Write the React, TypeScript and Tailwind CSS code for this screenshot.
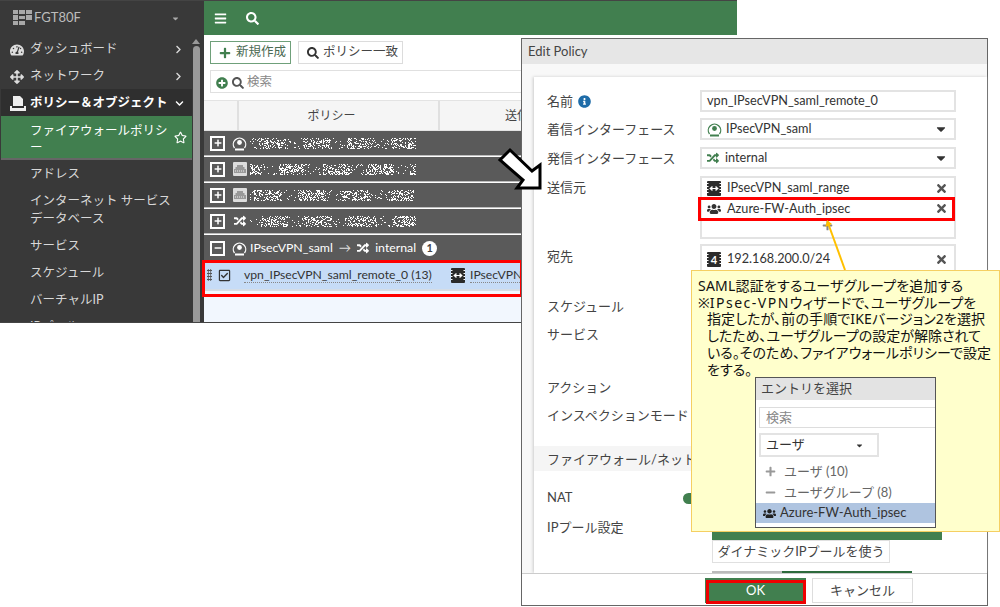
import type { ReactNode } from "react";
import {
  FaBars,
  FaCaretDown,
  FaChevronDown,
  FaChevronRight,
  FaMinus,
  FaPlus,
  FaPlusCircle,
  FaRandom,
  FaRegCheckSquare,
  FaRegStar,
  FaSearch,
  FaTachometerAlt,
  FaArrowsAlt,
  FaTimes,
  FaUsers,
  FaInfoCircle,
} from "react-icons/fa";

// white speckle used for the blurred-out policy names
function noisePath(seed: number) {
  let s = seed;
  const rnd = () => {
    s = (s * 1664525 + 1013904223) % 4294967296;
    return s / 4294967296;
  };
  let d = "";
  for (let x = 0; x < 166; x++) {
    const dense = Math.sin(x / 7 + seed) > -0.4 ? 0.36 : 0.08;
    for (let y = 3; y < 14; y++) {
      if (rnd() < dense) d += `M${x} ${y}h1v1h-1z`;
    }
  }
  return d;
}

function Noise({ seed }: { seed: number }) {
  return (
    <svg width="166" height="16" viewBox="0 0 166 16" className="-ml-[4px] shrink-0">
      <path d={noisePath(seed)} fill="#fff" />
    </svg>
  );
}

function FortiLogo() {
  return (
    <svg width="19" height="16" viewBox="0 0 19 16" fill="#a8a8a8">
      <rect x="0" y="0" width="5" height="4" />
      <rect x="6" y="0" width="6" height="4" />
      <rect x="13" y="0" width="6" height="4" />
      <rect x="0" y="5" width="5" height="5" />
      <rect x="13" y="5" width="6" height="5" />
      <rect x="6" y="6" width="6" height="3" />
      <rect x="0" y="11" width="5" height="4" />
      <rect x="6" y="11" width="6" height="4" />
    </svg>
  );
}

function PolicyIcon() {
  return (
    <svg width="16" height="15" viewBox="0 0 16 15" fill="#eee">
      <path d="M3 0h7l3 3v7H3z" />
      <path d="M0 10h2v2h12v-2h2v5H0z" />
    </svg>
  );
}

function TunnelIcon({ color = "#fff" }: { color?: string }) {
  return (
    <svg width="15" height="15" viewBox="0 0 15 15" fill="none" stroke={color}>
      <path d="M2.5 12A6.2 6.2 0 1 1 12.5 12" strokeWidth="1.3" />
      <circle cx="7.5" cy="6.5" r="2.4" fill={color} stroke="none" />
      <path d="M3 13.5h9" strokeWidth="2" />
    </svg>
  );
}

function PortIcon() {
  return (
    <svg width="14" height="14" viewBox="0 0 14 14">
      <rect width="14" height="14" rx="1" fill="#ddd" />
      <path d="M4 3h6v2h1.500v2H13v4H1V7h1.500V5H4z" fill="#999" />
      <path d="M2 9h10" stroke="#eee" strokeDasharray="1 1" />
    </svg>
  );
}

function AddrIcon({ children }: { children?: ReactNode }) {
  return (
    <svg width="14" height="15" viewBox="0 0 14 15" className="shrink-0">
      <rect width="14" height="15" rx="1" fill="#2b2b2b" />
      <path d="M0 2.500h1.500M0 5.500h1.500M0 8.500h1.500M0 11.500h1.500M12.500 2.500H14M12.500 5.500H14M12.500 8.500H14M12.500 11.500H14" stroke="#fff" />
      {children ?? (
        <path d="M3 7.500h8M3 7.500l2-2v4zM11 7.500l-2-2v4z" stroke="#fff" fill="#fff" strokeWidth="1" />
      )}
    </svg>
  );
}

function SideItem({ label, tall }: { label: ReactNode; tall?: boolean }) {
  return (
    <div className={`flex items-center pl-[29px] pr-3 text-[12.500px] leading-[18px] text-[#d8d8d8] ${tall ? "h-[45px]" : "h-[27px]"}`}>
      {label}
    </div>
  );
}

function GroupRow({ icon, seed }: { icon: ReactNode; seed: number }) {
  return (
    <div className="mb-px flex h-[25px] items-center gap-[7px] border-b border-[#bdbdbd] bg-[#5a5a5a] pl-[6px]">
      <span className="flex h-[15px] w-[15px] items-center justify-center border-2 border-white text-white">
        <FaPlus size={8} />
      </span>
      <span className="flex w-[15px] justify-center">{icon}</span>
      <Noise seed={seed} />
    </div>
  );
}

function FormRow({ label, className, children }: { label: ReactNode; className: string; children?: ReactNode }) {
  return (
    <div className={`flex shrink-0 ${className}`}>
      <div className="flex w-[166px] shrink-0 items-start whitespace-nowrap pl-[13px] text-[13px] leading-[22px] text-[#444]">{label}</div>
      {children}
    </div>
  );
}

function Field({ children, className }: { children: ReactNode; className?: string }) {
  return (
    <div className={`flex w-[256px] items-center border-2 border-[#e3e3e3] bg-white pl-[5px] pr-[6px] text-[12.700px] text-[#333] ${className ?? "h-[22px]"}`}>
      {children}
    </div>
  );
}

const noteLine = "whitespace-pre font-['Noto_Sans','Noto_Sans_CJK_JP',sans-serif] text-[14px] leading-[16.700px] text-[#111] [font-feature-settings:'palt']";

export default function App() {
  return (
    <div className="relative h-[607px] w-[1000px] overflow-hidden bg-white font-['Lato','Noto_Sans_CJK_JP',sans-serif]">
      {/* back window */}
      <div className="absolute left-0 top-0 flex h-[323px] w-[737px] overflow-hidden border-t border-b border-[#444]">
        <aside className="flex w-[204px] shrink-0 bg-[#393939]">
          <div className="w-[192px] pl-px">
            <div className="flex h-[34px] items-center pl-3 pr-3 text-[13px] text-[#bcbcbc]">
              <FortiLogo />
              <span className="ml-[2px]">FGT80F</span>
              <FaCaretDown size={9} className="ml-auto text-[#aaa]" />
            </div>
            <div className="flex h-[27px] items-center pl-[9px] pr-2 pt-[2px] text-[12.500px] text-[#d8d8d8]">
              <FaTachometerAlt size={14} className="mr-[6px] text-[#ddd]" />
              ダッシュボード
              <FaChevronRight size={9} className="ml-auto mr-[1px]" />
            </div>
            <div className="flex h-[27px] items-center pl-[9px] pr-2 pt-[2px] text-[12.500px] text-[#d8d8d8]">
              <FaArrowsAlt size={14} className="mr-[6px] text-[#ddd]" />
              ネットワーク
              <FaChevronRight size={9} className="ml-auto mr-[1px]" />
            </div>
            <div className="flex h-[27px] items-center bg-[#2f2f2f] pl-[9px] pr-2 pt-[2px] text-[12.500px] font-bold text-white">
              <span className="mr-[4px]"><PolicyIcon /></span>
              ポリシー＆オブジェクト
              <FaChevronDown size={9} className="ml-auto" />
            </div>
            <div className="flex h-[44px] items-center border-b-2 border-[#666] bg-[#417f4f] pl-[29px] pr-[5px] text-[12.500px] leading-[17px] text-white">
              <span className="w-[140px] pt-[4px]">ファイアウォールポリシー</span>
              <FaRegStar size={13} className="ml-auto" />
            </div>
            <SideItem label="アドレス" />
            <SideItem tall label={<span>インターネット サービス<br />データベース</span>} />
            <SideItem label="サービス" />
            <SideItem label="スケジュール" />
            <SideItem label="バーチャルIP" />
            <SideItem label="IPプール" />
          </div>
          <div className="flex w-[8px] flex-col items-center pt-[38px]">
            <span className="h-0 w-0 border-x-[4px] border-b-[5px] border-x-transparent border-b-[#999]" />
            <span className="mt-[2px] h-full w-[7px] rounded-t bg-[#9a9a9a]" />
          </div>
        </aside>
        <main className="flex min-w-0 flex-1 flex-col bg-white">
          <div className="flex h-[34px] shrink-0 items-center gap-[19px] bg-[#417f4f] pl-[10px] text-white">
            <FaBars size={13} />
            <FaSearch size={13} />
          </div>
          <div className="flex gap-[7px] pl-[6px] pt-[6px]">
            <button className="flex h-[23px] w-[81px] items-center gap-[5px] whitespace-nowrap border border-[#6fa07a] pl-2 text-[12.500px] text-[#4b6a52]">
              <FaPlus size={12} className="text-[#417f4f]" />
              新規作成
            </button>
            <button className="flex h-[23px] w-[105px] items-center gap-[4px] whitespace-nowrap border border-[#dcdcdc] pl-2 text-[12.500px] text-[#444]">
              <FaSearch size={12} className="text-[#333]" />
              ポリシー一致
            </button>
          </div>
          <div className="ml-[6px] mt-[6px] flex h-[23px] w-[320px] items-center border border-[#e0e0e0] pl-[5px] pt-[2px] text-[12.500px] text-[#888]">
            <FaPlusCircle size={12} className="text-[#417f4f]" />
            <FaSearch size={12} className="ml-[4px] mr-[3px] text-[#555]" />
            検索
          </div>
          <div className="mt-[7px] flex h-[31px] shrink-0 border-t border-b border-[#e3e3e3] bg-[#f5f5f5] text-[12px] text-[#444]">
            <div className="w-[35px] border-r-2 border-[#e0e0e0]" />
            <div className="flex w-[201px] items-center justify-center border-r-2 border-[#e0e0e0] pr-[14px]">ポリシー</div>
            <div className="flex w-[150px] items-center justify-center pl-[16px]">送信元</div>
          </div>
          <GroupRow seed={11} icon={<TunnelIcon />} />
          <GroupRow seed={27} icon={<PortIcon />} />
          <GroupRow seed={43} icon={<PortIcon />} />
          <GroupRow seed={61} icon={<FaRandom size={12} className="text-white" />} />
          <div className="flex h-[26px] shrink-0 items-center gap-[7px] bg-[#5a5a5a] pl-[6px] text-[12.300px] text-white">
            <span className="flex h-[15px] w-[15px] items-center justify-center border-2 border-white">
              <FaMinus size={8} />
            </span>
            <span className="flex w-[15px] justify-center"><TunnelIcon /></span>
            <span className="-ml-[4px] flex items-center gap-[6px]">
              IPsecVPN_saml
              <span className="text-[#ddd]">→</span>
              <FaRandom size={12} />
              internal
              <span className="flex h-[15px] w-[15px] items-center justify-center rounded-full bg-white text-[11px] font-bold text-[#444]">1</span>
            </span>
          </div>
          <div className="flex h-[30px] shrink-0 items-center border-b-2 border-[#d5dde6] bg-[#c6dcf7] text-[12.200px] text-[#333]">
            <span className="flex w-[35px] items-center gap-[6px] pl-[3px]">
              <span className="h-[12px] w-[5px] bg-[radial-gradient(#555_1px,transparent_1px)] bg-[length:2.500px_3px]" />
              <FaRegCheckSquare size={13} className="text-[#333]" />
            </span>
            <span className="w-[207px] pl-[5px]">
              <span className="border-b border-dotted border-[#888] leading-[15px]">vpn_IPsecVPN_saml_remote_0 (13)</span>
            </span>
            <span className="flex items-center gap-[5px] pl-[5px]">
              <AddrIcon />
              <span className="border-b border-dotted border-[#888] leading-[15px]">IPsecVPN_saml_range</span>
            </span>
          </div>
          <div className="flex-1 bg-[#f2f7fe]" />
        </main>
      </div>

      {/* red highlight on the policy row */}
      <div className="absolute left-[202px] top-[260px] h-[37px] w-[321px] border-[3px] border-[#f00]" />

      {/* Edit Policy dialog */}
      <section className="absolute left-[521px] top-[38px] flex h-[568px] w-[467px] flex-col border border-[#666] bg-[#f8f8f8]">
        <div className="flex h-[25px] shrink-0 items-center bg-[#e6e6e6] pl-[6px] text-[13px] text-[#444]">Edit Policy</div>
        <div className="ml-[12px] mt-[13px] flex min-h-0 flex-1 flex-col overflow-hidden bg-white pt-[13px] shadow-[-1px_0_3px_#ccc]">
          <FormRow label={<span className="flex items-center gap-[5px]">名前<FaInfoCircle size={13} className="text-[#1f6ca8]" /></span>} className="h-[28px]">
            <Field>vpn_IPsecVPN_saml_remote_0</Field>
          </FormRow>
          <FormRow label="着信インターフェース" className="h-[29px]">
            <Field>
              <TunnelIcon color="#417f4f" />
              <span className="ml-[4px]">IPsecVPN_saml</span>
              <FaCaretDown size={14} className="ml-auto text-[#333]" />
            </Field>
          </FormRow>
          <FormRow label="発信インターフェース" className="h-[29px]">
            <Field>
              <FaRandom size={12} className="text-[#417f4f]" />
              <span className="ml-[6px]">internal</span>
              <FaCaretDown size={14} className="ml-auto text-[#333]" />
            </Field>
          </FormRow>
          <FormRow label="送信元" className="h-[69px]">
            <div className="flex h-[63px] w-[256px] flex-col border-2 border-[#e3e3e3] pl-[5px] pr-[6px] text-[12.700px] text-[#333]">
              <div className="flex h-[20px] shrink-0 items-center">
                <AddrIcon />
                <span className="ml-[6px]">IPsecVPN_saml_range</span>
                <FaTimes size={13} className="ml-auto text-[#555]" />
              </div>
              <div className="flex h-[21px] shrink-0 items-center">
                <FaUsers size={14} className="text-[#333]" />
                <span className="ml-[6px]">Azure-FW-Auth_ipsec</span>
                <FaTimes size={13} className="ml-auto text-[#555]" />
              </div>
              <div className="flex flex-1 justify-center pt-[1px]">
                <FaPlus size={11} className="text-[#888]" />
              </div>
            </div>
          </FormRow>
          <FormRow label="宛先" className="h-[50px]">
            <Field className="-mt-px h-[30px]">
              <AddrIcon>
                <text x="7" y="12" textAnchor="middle" fontSize="11" fontWeight="700" fill="#fff">4</text>
              </AddrIcon>
              <span className="ml-[6px]">192.168.200.0/24</span>
              <FaTimes size={13} className="ml-auto text-[#555]" />
            </Field>
          </FormRow>
          <FormRow label="スケジュール" className="h-[28px]" />
          <FormRow label="サービス" className="h-[53px]" />
          <FormRow label="アクション" className="h-[28px]" />
          <FormRow label="インスペクションモード" className="h-[42px]" />
          <div className="flex h-[25px] shrink-0 items-center whitespace-nowrap bg-[#f5f5f5] pl-[13px] pt-[3px] text-[13px] text-[#444]">ファイアウォール/ネットワークオプション</div>
          <div className="mt-[17px] flex h-[20px] shrink-0 items-center pl-[13px] text-[13px] text-[#444]">
            NAT
            <span className="ml-[110px] h-[11px] w-[22px] rounded-full bg-[#417f4f]" />
          </div>
          <div className="mt-[9px] flex h-[23px] shrink-0 pl-[13px] text-[13px] leading-[20px] text-[#444]">
            IPプール設定
            <span className="ml-[89px] h-[23px] w-[230px] bg-[#417f4f]" />
          </div>
          <div className="ml-[178px] flex h-[23px] w-[178px] shrink-0 items-center justify-center border border-[#e0e0e0] text-[13px] text-[#444]">
            ダイナミックIPプールを使う
          </div>
          <div className="ml-[178px] mt-[8px] flex shrink-0">
            <span className="h-[2px] w-[70px] bg-[#bbb]" />
            <span className="h-[2px] w-[130px] bg-[#2d6a3c]" />
          </div>
        </div>
        <div className="flex h-[32px] shrink-0 items-start gap-[6px] border-t border-[#ccc] bg-white pl-[183px] pt-[4px]">
          <button className="flex h-[25px] w-[101px] items-center justify-center bg-[#417f4f] text-[13px] text-white">OK</button>
          <button className="flex h-[25px] w-[101px] items-center justify-center border border-[#ddd] text-[13px] text-[#444]">キャンセル</button>
        </div>
      </section>

      {/* red highlights on the dialog */}
      <div className="absolute left-[698px] top-[197px] h-[24px] w-[257px] border-[3px] border-[#f00]" />
      <div className="absolute left-[706px] top-[580px] h-[24px] w-[100px] border-[3px] border-[#e00]" />

      {/* big arrow and leader line */}
      <svg className="absolute left-[495px] top-[145px]" width="50" height="50" viewBox="0 0 50 50">
        <path d="M15 5 L37 26 L45 20 L45 43 L22 43 L28 35 L5 15 Z" fill="#fff" stroke="#000" strokeWidth="3" />
      </svg>
      <svg className="absolute left-[820px] top-[215px]" width="30" height="60" viewBox="0 0 30 60">
        <path d="M25 55 L8 8" stroke="#ffc000" strokeWidth="2" />
        <path d="M7 5 L5.500 12 L12 9 Z" fill="#ffc000" />
      </svg>

      {/* yellow note */}
      <div className="absolute left-[691px] top-[270px] h-[262px] w-[309px] border border-[#f5cf62] bg-[#ffffcc] pl-[6px] pt-[7px]">
        <div className={`${noteLine} tracking-[0.2px]`}>SAML認証をするユーザグループを追加する</div>
        <div className={noteLine}>※<span className="tracking-[1.500px]">IPsec-VPN</span>ウィザードで、ユーザグループを</div>
        <div className={`${noteLine} pl-[9px] tracking-[0.120px]`}>指定したが、前の手順でIKEバージョン2を選択</div>
        <div className={`${noteLine} pl-[9px]`}>したため、ユーザグループの設定が解除されて</div>
        <div className={`${noteLine} pl-[9px]`}>いる。そのため、ファイアウォールポリシーで設定</div>
        <div className={`${noteLine} pl-[9px]`}>をする。</div>
      </div>

      {/* entry picker pasted on the note */}
      <div className="absolute left-[755px] top-[377px] flex h-[151px] w-[181px] flex-col border border-[#555] bg-white text-[13px] text-[#555]">
        <div className="flex h-[22px] shrink-0 items-center bg-[#e3e3e3] pl-[5px] text-[#444]">エントリを選択</div>
        <div className="ml-[3px] mt-[7px] flex h-[21px] shrink-0 items-center border border-r-0 border-[#ddd] pl-[6px] text-[#888]">検索</div>
        <div className="ml-[3px] mt-[5px] flex h-[24px] w-[120px] shrink-0 items-center border-2 border-[#e3e3e3] pl-[5px] text-[#333]">
          ユーザ
          <FaCaretDown size={9} className="ml-auto mr-[13px]" />
        </div>
        <div className="mt-[4px] flex h-[21px] shrink-0 items-center gap-[8px] pl-[9px] text-[#666]">
          <FaPlus size={11} className="text-[#999]" />
          ユーザ (10)
        </div>
        <div className="flex h-[21px] shrink-0 items-center gap-[8px] pl-[9px] text-[#666]">
          <FaMinus size={11} className="text-[#999]" />
          ユーザグループ (8)
        </div>
        <div className="flex h-[20px] shrink-0 items-center gap-[4px] bg-[#afc4e0] pl-[7px] text-[#333]">
          <FaUsers size={13} className="text-[#222]" />
          Azure-FW-Auth_ipsec
        </div>
      </div>
    </div>
  );
}
